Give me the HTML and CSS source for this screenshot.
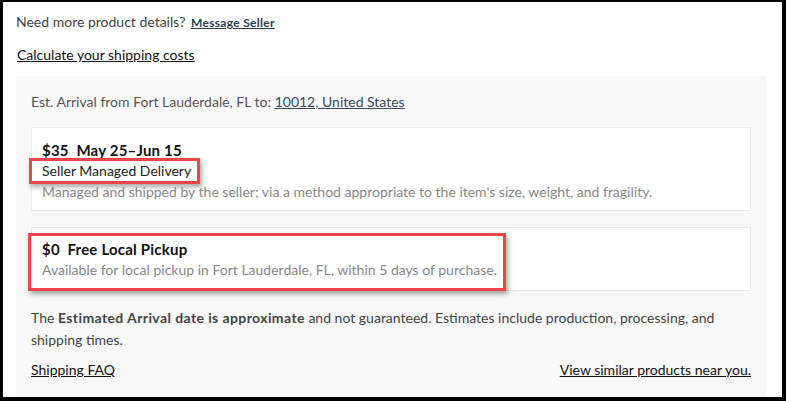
FILE: index.html
```html
<!DOCTYPE html>
<html lang="en">
<head>
    <meta charset="utf-8">
    <meta name="viewport" content="width=device-width, initial-scale=1.0">
    <title>Shipping</title>
    <link rel="stylesheet" href="styles.css">
</head>
<body>
    <div class="frame">
        <p class="contact">Need more product details? <a href="#" class="msg-link">Message Seller</a></p>
        <p class="calc"><a href="#">Calculate your shipping costs</a></p>

        <div class="panel">
            <p class="arrival">Est. Arrival from Fort Lauderdale, FL to: <a href="#">10012, United States</a></p>

            <div class="option">
                <div class="opt-title">$35&nbsp;&nbsp;May 25–Jun 15</div>
                <div class="opt-name"><span class="mark mark-small">Seller Managed Delivery</span></div>
                <div class="opt-desc">Managed and shipped by the seller; via a method appropriate to the item's size, weight, and fragility.</div>
            </div>

            <div class="option option-pickup">
                <div class="mark mark-big">
                    <div class="opt-title">$0&nbsp;&nbsp;Free Local Pickup</div>
                    <div class="opt-desc">Available for local pickup in Fort Lauderdale, FL, within 5 days of purchase.</div>
                </div>
            </div>

            <p class="note"><span>The </span><b>Estimated Arrival date is approximate</b><span> and not guaranteed. Estimates include production, processing, and shipping times.</span></p>

            <div class="links">
                <a href="#">Shipping FAQ</a>
                <a href="#">View similar products near you.</a>
            </div>
        </div>
    </div>
</body>
</html>
```

FILE: styles.css
```css
html, body {
    margin: 0;
    padding: 0;
    background: #000;
}

body {
    font-family: 'Lato', 'Open Sans', sans-serif;
    font-size: 14px;
    color: #333;
}

.frame {
    width: 779px;
    height: 395px;
    margin-top: 2px;
    margin-left: 3px;
    background: #fff;
    padding: 0 16px 0 13px;
    box-sizing: border-box;
    overflow: hidden;
}

p {
    margin: 0;
}

a {
    color: #111;
}

.contact {
    padding-top: 11px;
    font-size: 14px;
    color: #444;
}

.msg-link {
    font-size: 12px;
    font-weight: bold;
    color: #2c3e50;
    letter-spacing: 0.3px;
    margin-left: 2px;
}

.calc {
    margin-top: 16px;
    padding-left: 1px;
    font-size: 14px;
}

.panel {
    margin-top: 13px;
    background: #f8f8f8;
    padding: 17px 15px 20px 15px;
    height: 400px;
}

.arrival {
    color: #555;
}

.arrival a {
    color: #3a4a5c;
}

.option {
    margin-top: 17px;
    background: #fff;
    border: 1px solid #e8e8e8;
    padding: 12px 10px 8px 10px;
}

.opt-title {
    font-weight: bold;
    font-size: 15px;
    letter-spacing: 0.2px;
    color: #111;
    line-height: 20px;
}

.opt-name {
    line-height: 22px;
    color: #222;
}

.opt-desc {
    color: #888;
    line-height: 20px;
}

.mark {
    border: 3px solid #ef4448;
    box-shadow: 2px 3px 5px rgba(0, 0, 0, 0.35);
}

.mark-small {
    display: inline-block;
    margin: -2px 0 -2px -13px;
    padding: 0 6px 0 10px;
    line-height: 20px;
}

.option-pickup {
    margin-top: 16px;
    padding: 5px 0 0 0;
}

.mark-big {
    display: inline-block;
    margin-left: -4px;
    margin-bottom: -1px;
    padding: 3px 6px 7px 11px;
}

.mark-big .opt-desc {
    line-height: 22px;
}

.note {
    margin-top: 16px;
    color: #444;
    line-height: 22px;
}

.note b {
    letter-spacing: 0.4px;
}

.links {
    margin-top: 10px;
    display: flex;
    justify-content: space-between;
}
```
